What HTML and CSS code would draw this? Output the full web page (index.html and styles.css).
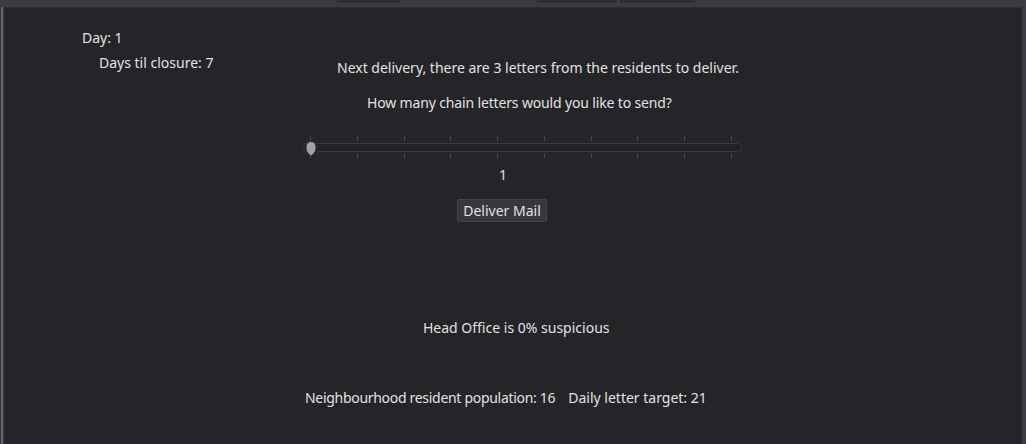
FILE: index.html
```html
<!DOCTYPE html>
<html lang="en">
<head>
    <meta charset="UTF-8">
    <meta name="viewport" content="width=device-width, initial-scale=1.0">
    <title>Chain Letters</title>
    <link rel="stylesheet" href="styles.css">
</head>
<body>

    <!-- editor tab strip along the top edge -->
    <div class="tab-strip">
        <span class="tab tab-a"></span>
        <span class="tab tab-b"></span>
        <span class="tab tab-c"></span>
    </div>

    <div class="window">
        <div class="panel">

            <!-- Day counter -->
            <div class="stats">
                <div class="line day">Day: 1</div>
                <div class="line closure">Days til closure: 7</div>
            </div>

            <!-- Main game column -->
            <div class="game">
                <div class="line next">Next delivery, there are 3 letters from the residents to deliver.</div>
                <div class="line question">How many chain letters would you like to send?</div>

                <div class="slider">
                    <div class="ticks">
                        <span></span><span></span><span></span><span></span><span></span>
                        <span></span><span></span><span></span><span></span><span></span>
                    </div>
                    <div class="track"></div>
                    <div class="ticks">
                        <span></span><span></span><span></span><span></span><span></span>
                        <span></span><span></span><span></span><span></span><span></span>
                    </div>
                    <svg class="grabber" width="14" height="18" viewBox="0 0 14 18">
                        <circle cx="7" cy="8" r="7" fill="none" stroke="#2e2d33" stroke-width="1"/>
                        <path d="M7 2 C9.8 2 11.5 3.8 11.5 6.5 L11.5 9 C11.5 11.5 9 14 7 15.5 C5 14 2.5 11.5 2.5 9 L2.5 6.5 C2.5 3.8 4.2 2 7 2 Z" fill="#a2a1a6"/>
                    </svg>
                </div>

                <div class="line value">1</div>
                <button class="deliver">Deliver Mail</button>

                <div class="line suspicion">Head Office is 0% suspicious</div>
                <div class="line footer-stats">
                    <span class="population">Neighbourhood resident population: 16</span>
                    <span>Daily letter target: 21</span>
                </div>
            </div>

        </div>
        <div class="scroll-edge"></div>
    </div>

</body>
</html>
```
FILE: styles.css
```css
body {
    margin: 0;
    height: 444px;
    overflow: hidden;
    background-color: #3c3b45;
    font-family: "Noto Sans", "Open Sans", sans-serif;
    font-size: 14px;
    color: #e2e2e2;
}

.tab-strip {
    height: 7px;
    position: relative;
}

.tab {
    position: absolute;
    top: 0;
    height: 3px;
    background-color: #2f2e37;
}

.tab-a { left: 337px; width: 63px; }
.tab-b { left: 537px; width: 80px; }
.tab-c { left: 620px; width: 75px; }

.window {
    display: flex;
    height: 437px;
    border-left: 1px solid #35343b;
    box-shadow: inset 2px 0 0 #64636b;
    padding-left: 3px;
    padding-right: 4px;
}

.panel {
    flex: 1;
    display: flex;
    background-color: #252429;
    border-top: 1px solid #2d2c33;
}

.scroll-edge {
    width: 1px;
    background-color: #2c2b31;
}

.line {
    height: 20px;
    line-height: 20px;
    white-space: nowrap;
}

/* left column */
.stats {
    width: 290px;
    flex: none;
    padding-top: 20px;
}

.day {
    padding-left: 78px;
}

.closure {
    margin-top: 5px;
    padding-left: 95px;
}

/* centre column */
.game {
    flex: 1;
    padding-top: 50px;
}

.next {
    margin-left: 43px;
}

.question {
    margin-top: 15px;
    margin-left: 73px;
    letter-spacing: -0.15px;
}

.slider {
    position: relative;
    width: 439px;
    margin-top: 23px;
    margin-left: 9px;
}

.ticks {
    display: flex;
    justify-content: space-between;
    height: 5px;
    padding: 0 10px 0 7px;
}

.ticks span {
    width: 1px;
    background-color: #4a4950;
}

.track {
    height: 7px;
    margin: 2px 0 1px;
    background-color: #222126;
    border: 1px solid #3a3940;
    border-radius: 5px;
}

.grabber {
    position: absolute;
    left: 1px;
    top: 4px;
}

.value {
    margin-top: 7px;
    margin-left: 205px;
}

.deliver {
    display: block;
    margin-top: 14px;
    margin-left: 163px;
    width: 90px;
    height: 23px;
    padding: 0;
    font-family: inherit;
    font-size: 14px;
    color: #e2e2e2;
    background-color: #38373f;
    border: 1px solid #46454d;
    border-radius: 2px;
}

.suspicion {
    margin-top: 96px;
    margin-left: 129px;
}

.footer-stats {
    display: flex;
    gap: 13px;
    margin-top: 50px;
    margin-left: 11px;
}

.population {
    letter-spacing: -0.3px;
}
```
